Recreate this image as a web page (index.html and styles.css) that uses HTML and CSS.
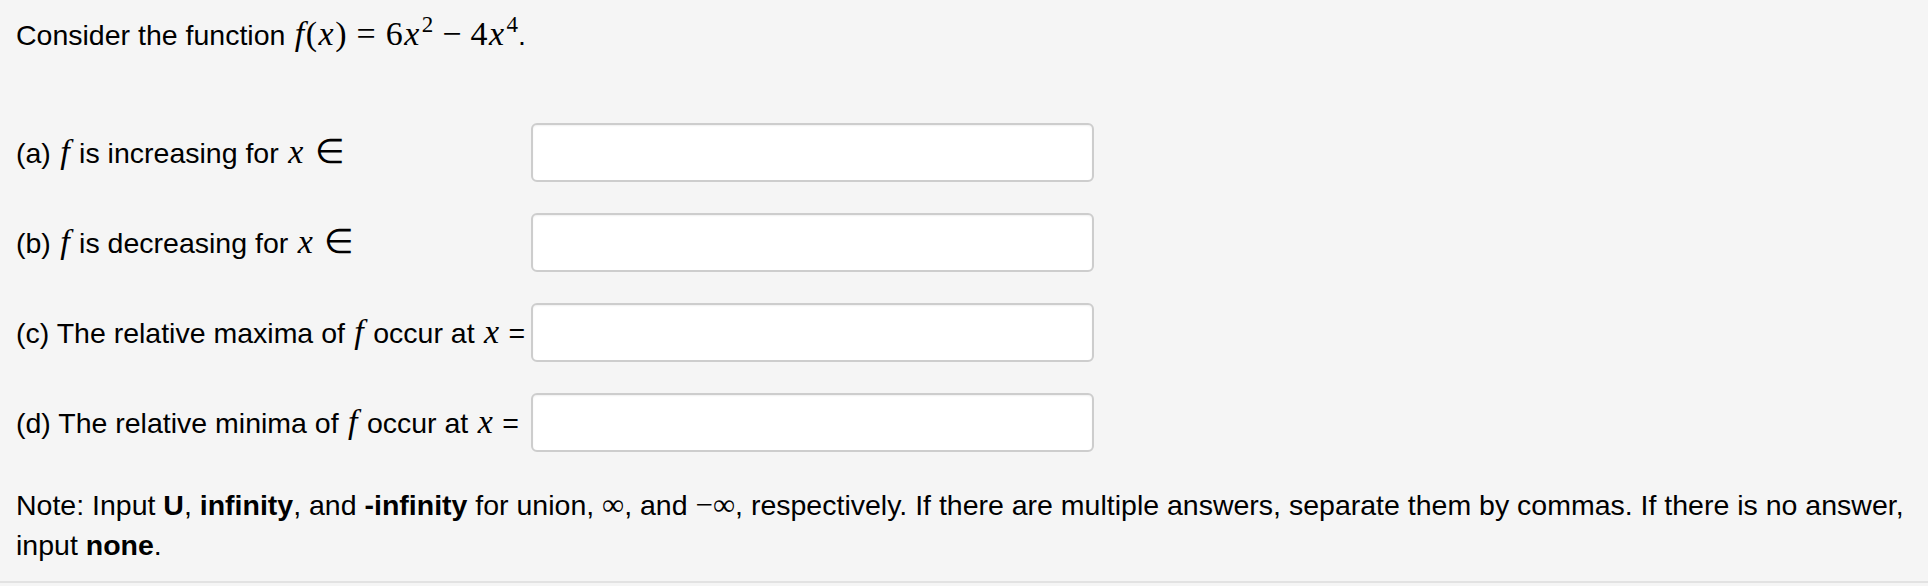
FILE: index.html
```html
<!DOCTYPE html>
<html>
<head>
<meta charset="utf-8">
<link rel="stylesheet" href="styles.css">
</head>
<body>
<div class="problem">
  <p class="intro">Consider the function <span class="math"><i>f</i><span class="p">(</span><i>x</i><span class="p">)</span><span class="rel">=</span>6<i>x</i><sup>2</sup><span class="bin">−</span>4<i>x</i><sup>4</sup></span>.</p>

  <div class="rows">
    <div class="label">(a) <span class="math"><i>f</i></span> is increasing for <span class="math"><i>x</i><span class="rel">∈</span></span></div>
    <input class="answer" type="text">

    <div class="label">(b) <span class="math"><i>f</i></span> is decreasing for <span class="math"><i>x</i><span class="rel">∈</span></span></div>
    <input class="answer" type="text">

    <div class="label">(c) The relative maxima of <span class="math"><i>f</i></span> occur at <span class="math"><i>x</i></span> =</div>
    <input class="answer" type="text">

    <div class="label">(d) The relative minima of <span class="math"><i>f</i></span> occur at <span class="math"><i>x</i></span> =</div>
    <input class="answer" type="text">
  </div>

  <p class="note">Note: Input <b>U</b>, <b>infinity</b>, and <b>-infinity</b> for union, <span class="math">∞</span>, and <span class="math">−∞</span>, respectively. If there are multiple answers, separate them by commas. If there is no answer, input <b>none</b>.</p>
</div>
</body>
</html>
```

FILE: styles.css
```css
html, body {
  margin: 0;
  padding: 0;
  background: #f5f5f5;
}

body {
  font-family: "Liberation Sans", Arial, sans-serif;
  font-size: 28.5px;
  line-height: 40px;
  color: #000;
}

.problem {
  padding: 15px 16px 16px 16px;
  border-bottom: 2px solid #e2e2e2;
}

.intro {
  margin: 0 0 68px 0;
}

.math {
  font-family: "Liberation Serif", "Times New Roman", serif;
  font-size: 34px;
  line-height: 1;
}

.math i {
  font-style: italic;
  padding: 0 1.5px;
}

.math sup {
  font-size: 23px;
  line-height: 0;
  vertical-align: 13px;
  margin-left: 1px;
}

.math .rel {
  margin: 0 10px;
}

.math .bin {
  margin: 0 9px;
}

.rows {
  display: grid;
  grid-template-columns: 515px 563px;
  row-gap: 31px;
  align-items: center;
}

.label {
  white-space: nowrap;
}

.answer {
  box-sizing: border-box;
  width: 563px;
  height: 59px;
  margin: 0;
  background: #fff;
  border: 2px solid #cdcdcd;
  border-radius: 6px;
  box-shadow: inset 0 1px 2px rgba(0, 0, 0, 0.06);
  font: inherit;
  padding: 0 10px;
}

.note {
  margin: 33px 0 0 0;
}

.note .math {
  font-size: 31px;
}

.note b {
  font-weight: bold;
}
```
